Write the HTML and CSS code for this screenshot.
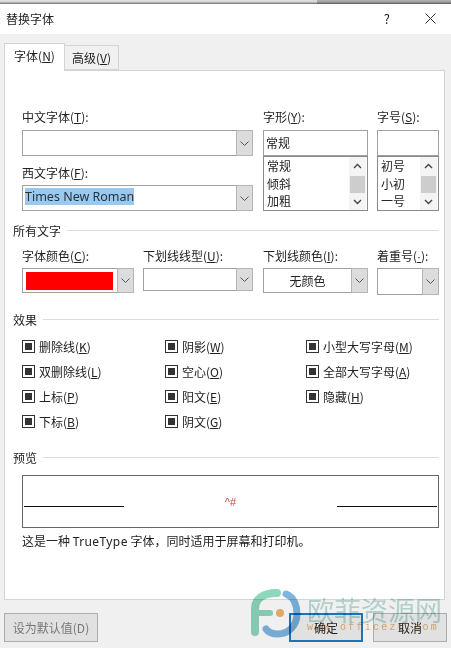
FILE: index.html
```html
<!DOCTYPE html>
<html lang="zh-CN">
<head>
    <meta charset="UTF-8">
    <meta name="viewport" content="width=device-width, initial-scale=1.0">
    <title>替换字体</title>
    <link rel="stylesheet" href="styles.css">
</head>
<body>
    <div class="topstrip">
        <span class="strip-light"></span>
        <span class="strip-dark"></span>
    </div>

    <div class="titlebar">
        <span class="title">替换字体</span>
        <span class="help">?</span>
        <svg class="close" width="11" height="11" viewBox="0 0 11 11"><path d="M0.5 0.5 L10.5 10.5 M10.5 0.5 L0.5 10.5" stroke="#333" stroke-width="1" fill="none"/></svg>
    </div>

    <div class="dialog">
        <div class="tabs">
            <div class="tab active">字体(<u>N</u>)</div>
            <div class="tab">高级(<u>V</u>)</div>
        </div>

        <div class="panel">
            <div class="font-row">
                <div class="col-name">
                    <label>中文字体(<u>T</u>):</label>
                    <div class="combo">
                        <div class="combo-text"></div>
                        <div class="combo-btn"><svg width="9" height="5" viewBox="0 0 9 5"><path d="M0.5 0.5 L4.5 4.5 L8.5 0.5" stroke="#555" fill="none"/></svg></div>
                    </div>
                    <label class="label-next">西文字体(<u>F</u>):</label>
                    <div class="combo">
                        <div class="combo-text"><span class="selected">Times New Roman</span></div>
                        <div class="combo-btn"><svg width="9" height="5" viewBox="0 0 9 5"><path d="M0.5 0.5 L4.5 4.5 L8.5 0.5" stroke="#555" fill="none"/></svg></div>
                    </div>
                </div>

                <div class="col-style">
                    <label>字形(<u>Y</u>):</label>
                    <div class="list-input">常规</div>
                    <div class="listbox">
                        <div class="list-items">
                            <div>常规</div>
                            <div>倾斜</div>
                            <div>加粗</div>
                        </div>
                        <div class="scroll">
                            <svg width="9" height="6" viewBox="0 0 9 6"><path d="M1 5 L4.5 1.5 L8 5" stroke="#444" stroke-width="1.4" fill="none"/></svg>
                            <div class="thumb"></div>
                            <svg width="9" height="6" viewBox="0 0 9 6"><path d="M1 1 L4.5 4.5 L8 1" stroke="#444" stroke-width="1.4" fill="none"/></svg>
                        </div>
                    </div>
                </div>

                <div class="col-size">
                    <label>字号(<u>S</u>):</label>
                    <div class="list-input"></div>
                    <div class="listbox">
                        <div class="list-items">
                            <div>初号</div>
                            <div>小初</div>
                            <div>一号</div>
                        </div>
                        <div class="scroll">
                            <svg width="9" height="6" viewBox="0 0 9 6"><path d="M1 5 L4.5 1.5 L8 5" stroke="#444" stroke-width="1.4" fill="none"/></svg>
                            <div class="thumb"></div>
                            <svg width="9" height="6" viewBox="0 0 9 6"><path d="M1 1 L4.5 4.5 L8 1" stroke="#444" stroke-width="1.4" fill="none"/></svg>
                        </div>
                    </div>
                </div>
            </div>

            <div class="group-head all-text"><span>所有文字</span><i></i></div>
            <div class="color-row">
                <div class="col-name-a">
                    <label>字体颜色(<u>C</u>):</label>
                    <div class="combo color-combo">
                        <div class="combo-text"><div class="swatch"></div></div>
                        <div class="combo-btn"><svg width="9" height="5" viewBox="0 0 9 5"><path d="M0.5 0.5 L4.5 4.5 L8.5 0.5" stroke="#555" fill="none"/></svg></div>
                    </div>
                </div>
                <div class="col-line">
                    <label>下划线线型(<u>U</u>):</label>
                    <div class="combo line-combo">
                        <div class="combo-text"></div>
                        <div class="combo-btn"><svg width="9" height="5" viewBox="0 0 9 5"><path d="M0.5 0.5 L4.5 4.5 L8.5 0.5" stroke="#555" fill="none"/></svg></div>
                    </div>
                </div>
                <div class="col-style">
                    <label>下划线颜色(<u>I</u>):</label>
                    <div class="combo under-combo">
                        <div class="combo-text centered">无颜色</div>
                        <div class="combo-btn"><svg width="9" height="5" viewBox="0 0 9 5"><path d="M0.5 0.5 L4.5 4.5 L8.5 0.5" stroke="#555" fill="none"/></svg></div>
                    </div>
                </div>
                <div class="col-size">
                    <label>着重号(<u class="dot">·</u>):</label>
                    <div class="combo mark-combo">
                        <div class="combo-text"></div>
                        <div class="combo-btn"><svg width="9" height="5" viewBox="0 0 9 5"><path d="M0.5 0.5 L4.5 4.5 L8.5 0.5" stroke="#555" fill="none"/></svg></div>
                    </div>
                </div>
            </div>

            <div class="group-head"><span>效果</span><i></i></div>
            <div class="checks">
                <div class="check"><b></b>删除线(<u>K</u>)</div>
                <div class="check"><b></b>阴影(<u>W</u>)</div>
                <div class="check"><b></b>小型大写字母(<u>M</u>)</div>
                <div class="check"><b></b>双删除线(<u>L</u>)</div>
                <div class="check"><b></b>空心(<u>O</u>)</div>
                <div class="check"><b></b>全部大写字母(<u>A</u>)</div>
                <div class="check"><b></b>上标(<u>P</u>)</div>
                <div class="check"><b></b>阳文(<u>E</u>)</div>
                <div class="check"><b></b>隐藏(<u>H</u>)</div>
                <div class="check"><b></b>下标(<u>B</u>)</div>
                <div class="check"><b></b>阴文(<u>G</u>)</div>
            </div>

            <div class="group-head preview-head"><span>预览</span><i></i></div>
            <div class="preview">
                <i class="rule"></i>
                <span class="sample">^#</span>
                <i class="rule"></i>
            </div>
            <p class="note">这是一种 <span class="latin">TrueType</span> 字体，同时适用于屏幕和打印机。</p>
        </div>

        <div class="footer">
            <button class="btn default-btn">设为默认值(D)</button>
            <button class="btn ok-btn">确定</button>
            <button class="btn cancel-btn">取消</button>
        </div>
    </div>

    <!-- watermark sits over the dialog -->
    <div class="watermark">
        <svg width="52" height="52" viewBox="0 0 52 52">
            <path d="M5 44 V21 C5 11 13 5 27 5" stroke="#8ed6bc" stroke-width="8" stroke-linecap="round" fill="none"/>
            <path d="M6 25 H20" stroke="#8ed6bc" stroke-width="6" stroke-linecap="round" fill="none"/>
            <path d="M36 6 C44 9 47 18 47 26 C47 38 38 46 28 46 C22 46 18 44 16 41" stroke="#7db5e0" stroke-width="7" stroke-linecap="round" fill="none"/>
            <circle cx="30" cy="25" r="4" fill="#f3b26e"/>
        </svg>
        <div class="wm-text">
            <span class="wm-cn">欧菲资源网</span>
            <span class="wm-en">www.officezu.com</span>
        </div>
    </div>
</body>
</html>
```

FILE: styles.css
```css
html, body {
    margin: 0;
    padding: 0;
}
body {
    width: 451px;
    height: 648px;
    overflow: hidden;
    position: relative;
    background: #f0f0f0;
    font-family: "Noto Sans CJK SC", "Liberation Sans", sans-serif;
    font-size: 12px;
    color: #222;
}
label {
    display: block;
    height: 16px;
    line-height: 16px;
    white-space: nowrap;
}

.topstrip {
    height: 4px;
    display: flex;
}
.strip-light {
    width: 317px;
    background: linear-gradient(#e4e4e4, #d0d0d0 50%, #666);
}
.strip-dark {
    flex: 1;
    background: linear-gradient(#b4b4b4, #a0a0a0 50%, #555);
}

.titlebar {
    height: 30px;
    background: #fff;
    display: flex;
    align-items: center;
    padding: 0 0 2px 6px;
    box-sizing: border-box;
}
.title {
    flex: 1;
}
.help {
    font-size: 13px;
    margin-right: 35px;
}
.close {
    margin-right: 15px;
}

.dialog {
    padding: 9px 0 0 4px;
}
.tabs {
    display: flex;
    height: 27px;
}
.tab {
    width: 54px;
    height: 25px;
    margin-top: 2px;
    line-height: 24px;
    text-align: center;
    border: 1px solid #d4d4d4;
    border-left: none;
    box-sizing: border-box;
}
.tab.active {
    width: 61px;
    height: 28px;
    margin-top: 0;
    background: #fff;
    border-left: 1px solid #d4d4d4;
    border-bottom: none;
    position: relative;
}

.panel {
    width: 441px;
    height: 530px;
    background: #fff;
    border: 1px solid #d4d4d4;
    box-sizing: border-box;
    padding: 38px 0 0 17px;
}

.font-row {
    display: flex;
}
.col-name {
    width: 241px;
}
.col-style {
    width: 114px;
}
.col-size {
    width: 62px;
}
.label-next {
    margin-top: 9px;
    height: 15px;
}

.combo {
    display: flex;
    height: 26px;
    width: 231px;
    border: 1px solid #a0a0a0;
    border-right: none;
    box-sizing: border-box;
    margin-top: 5px;
}
.combo-text {
    flex: 1;
    font-family: "Noto Sans", "Liberation Sans", sans-serif;
    padding: 2px;
    white-space: nowrap;
}
.combo-btn {
    width: 17px;
    margin: -1px 0;
    background: #dcdcdc;
    border: 1px solid #b5b5b5;
    box-sizing: border-box;
    display: flex;
    align-items: center;
    justify-content: center;
}
.selected {
    display: inline-block;
    background: #99c9ef;
    color: #234;
    font-size: 12.5px;
    line-height: 17px;
}

.list-input {
    width: 105px;
    height: 26px;
    margin-top: 5px;
    border: 1px solid #a0a0a0;
    box-sizing: border-box;
    line-height: 24px;
    padding-left: 2px;
}
.col-size .list-input,
.col-size .listbox {
    width: 62px;
}
.listbox {
    width: 105px;
    height: 55px;
    border: 1px solid #8a8a8a;
    box-sizing: border-box;
    display: flex;
}
.list-items {
    flex: 1;
    padding-left: 3px;
    line-height: 17.5px;
}
.scroll {
    width: 17px;
    margin-right: 1px;
    background: #f4f4f4;
    display: flex;
    flex-direction: column;
    align-items: center;
    justify-content: space-between;
    padding: 6px 0 5px;
    box-sizing: border-box;
}
.thumb {
    width: 15px;
    height: 17px;
    background: #cdcdcd;
}

.group-head {
    display: flex;
    align-items: center;
    gap: 6px;
    margin-left: -9px;
    width: 426px;
    height: 16px;
}
.group-head i {
    flex: 1;
    height: 1px;
    background: #dcdcdc;
}
.all-text {
    margin-top: 11px;
}

.color-row {
    display: flex;
    padding-top: 10px;
    height: 73px;
    box-sizing: border-box;
}
.col-name-a {
    width: 121px;
}
.col-line {
    width: 120px;
}
.color-row .combo {
    margin-top: 4px;
}
.color-combo {
    width: 112px;
    height: 25px;
}
.line-combo {
    width: 110px;
    height: 23px;
}
.under-combo {
    width: 105px;
    height: 25px;
}
.mark-combo {
    width: 62px;
    height: 27px;
}
.swatch {
    height: 18px;
    margin: 1px 2px 1px 1px;
    background: #ff0000;
}
.centered {
    text-align: center;
    font-family: "Noto Sans CJK SC", sans-serif;
    line-height: 19px;
}
.dot {
    font-family: "Liberation Sans", sans-serif;
}

.checks {
    display: grid;
    grid-template-columns: 143px 141px 1fr;
    grid-auto-rows: 25px;
    margin-top: 7px;
    height: 100px;
}
.check {
    display: flex;
    align-items: center;
    white-space: nowrap;
}
.check b {
    width: 11px;
    height: 11px;
    border: 1px solid #333;
    margin-right: 4px;
    position: relative;
    display: block;
    flex: none;
}
.check b::after {
    content: "";
    position: absolute;
    inset: 2px;
    background: #333;
}

.preview-head {
    margin-top: 15px;
}
.preview {
    width: 417px;
    height: 53px;
    margin-top: 10px;
    border: 1px solid #666;
    box-sizing: border-box;
    display: flex;
    align-items: center;
    padding: 0 1px;
}
.rule {
    width: 100px;
    height: 1px;
    background: #111;
    margin-top: 9px;
}
.sample {
    flex: 1;
    text-align: center;
    color: #d04040;
    font-size: 11px;
    font-family: "Liberation Sans", sans-serif;
}
.note {
    margin: 4px 0 0;
    line-height: 18px;
    white-space: nowrap;
}
.latin {
    font-family: "Noto Sans", sans-serif;
    letter-spacing: .4px;
}

.footer {
    display: flex;
    padding-top: 13px;
}
.btn {
    height: 29px;
    font-family: inherit;
    font-size: 12px;
    border: 1px solid #adadad;
    background: #e1e1e1;
    padding: 0;
    color: #222;
}
.default-btn {
    width: 94px;
    color: #777;
}
.ok-btn {
    width: 74px;
    margin-left: 191px;
    border: 2px solid #1b73b9;
}
.cancel-btn {
    width: 74px;
    margin-left: 10px;
}

.watermark {
    position: absolute;
    left: 250px;
    top: 588px;
    display: flex;
    gap: 5px;
    mix-blend-mode: multiply;
}
.wm-text {
    display: flex;
    flex-direction: column;
    padding-top: 7px;
}
.wm-cn {
    font-size: 27px;
    line-height: 30px;
    color: #bcdcd8;
    white-space: nowrap;
}
.wm-en {
    font-family: "Liberation Mono", monospace;
    font-size: 10px;
    line-height: 12px;
    margin-top: -3px;
    letter-spacing: 2.25px;
    color: #e9b67f;
    white-space: nowrap;
}
```
